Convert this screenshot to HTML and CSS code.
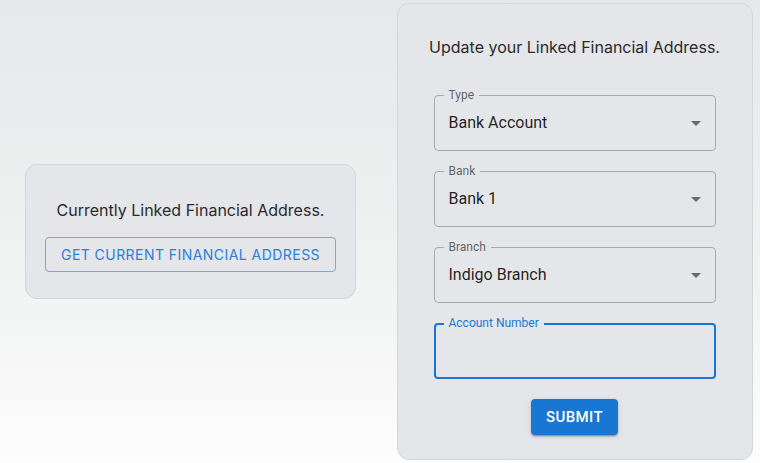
FILE: index.html
```html
<!DOCTYPE html>
<html>
<head>
<meta charset="utf-8">
<link rel="stylesheet" href="styles.css">
</head>
<body>
<main class="page">
  <section class="card card-current">
    <p class="card-title">Currently Linked Financial Address.</p>
    <button class="btn-outline">GET CURRENT FINANCIAL ADDRESS</button>
  </section>
  <section class="card card-update">
    <p class="card-title title-update">Update your Linked Financial Address.</p>
    <div class="fields">
      <div class="field">
        <span class="field-label">Type</span>
        <span class="field-value">Bank Account</span>
        <svg class="arrow" viewBox="0 0 24 24" width="24" height="24"><path d="M7 10l5 5 5-5z"/></svg>
      </div>
      <div class="field">
        <span class="field-label">Bank</span>
        <span class="field-value">Bank 1</span>
        <svg class="arrow" viewBox="0 0 24 24" width="24" height="24"><path d="M7 10l5 5 5-5z"/></svg>
      </div>
      <div class="field">
        <span class="field-label">Branch</span>
        <span class="field-value">Indigo Branch</span>
        <svg class="arrow" viewBox="0 0 24 24" width="24" height="24"><path d="M7 10l5 5 5-5z"/></svg>
      </div>
      <div class="field field-focused">
        <span class="field-label">Account Number</span>
        <span class="field-value"></span>
      </div>
    </div>
    <button class="btn-contained">SUBMIT</button>
  </section>
</main>
</body>
</html>
```

FILE: styles.css
```css
html, body {
  margin: 0;
  padding: 0;
}
body {
  width: 760px;
  height: 463px;
  overflow: hidden;
  background: linear-gradient(180deg, #e6e8e9 0%, #f0f1f1 55%, #fdfdfd 100%);
  font-family: Inter, "Liberation Sans", sans-serif;
}
.page {
  height: 463px;
  display: flex;
  align-items: center;
  padding-left: 25px;
  gap: 41px;
  box-sizing: border-box;
}
.card {
  background: #e5e6e9;
  border: 1px solid #d3d6da;
  border-radius: 12px;
  box-sizing: border-box;
  display: flex;
  flex-direction: column;
  align-items: center;
}
.card-title {
  margin: 0;
  font-size: 16px;
  line-height: 24px;
  color: #2a2a2c;
  font-weight: 400;
  white-space: nowrap;
}
.card-current {
  width: 331px;
  height: 135px;
  padding: 33px 19px 0;
}
.btn-outline {
  margin-top: 15px;
  width: 291px;
  height: 35px;
  background: transparent;
  border: 1px solid rgba(25, 118, 210, 0.55);
  border-radius: 4px;
  color: #2a80d6;
  font-family: Inter, "Liberation Sans", sans-serif;
  font-size: 14px;
  letter-spacing: 0.45px;
  padding: 0;
}
.card-update {
  width: 356px;
  height: 457px;
  padding: 31px 37px 0 36px;
}
.title-update {
  margin-bottom: 36px;
}
.fields {
  display: flex;
  flex-direction: column;
  gap: 20px;
  width: 282px;
}
.field {
  position: relative;
  height: 56px;
  border: 1px solid #a7a8ab;
  border-radius: 4px;
  box-sizing: border-box;
  display: flex;
  align-items: center;
  padding-left: 14px;
  padding-bottom: 2px;
  font-family: Roboto, "Liberation Sans", sans-serif;
}
.field-label {
  position: absolute;
  left: 9px;
  top: -8px;
  padding: 0 5px;
  background: #e5e6e9;
  font-size: 12px;
  line-height: 14px;
  color: rgba(0, 0, 0, 0.6);
}
.field-value {
  font-size: 16px;
  color: rgba(0, 0, 0, 0.87);
}
.arrow {
  position: absolute;
  right: 7px;
  top: 15px;
  fill: rgba(0, 0, 0, 0.54);
}
.field-focused {
  border: 2px solid #1976d2;
  padding-left: 13px;
}
.field-focused .field-label {
  color: #1976d2;
  left: 8px;
  top: -9px;
}
.btn-contained {
  margin-top: 20px;
  width: 87px;
  height: 36px;
  border: none;
  border-radius: 4px;
  background: #1976d2;
  color: #fff;
  font-family: Roboto, "Liberation Sans", sans-serif;
  font-weight: 500;
  font-size: 15px;
  letter-spacing: 0.4px;
  box-shadow: 0 3px 1px -2px rgba(0,0,0,0.2), 0 2px 2px 0 rgba(0,0,0,0.14), 0 1px 5px 0 rgba(0,0,0,0.12);
  padding: 0;
}
```
